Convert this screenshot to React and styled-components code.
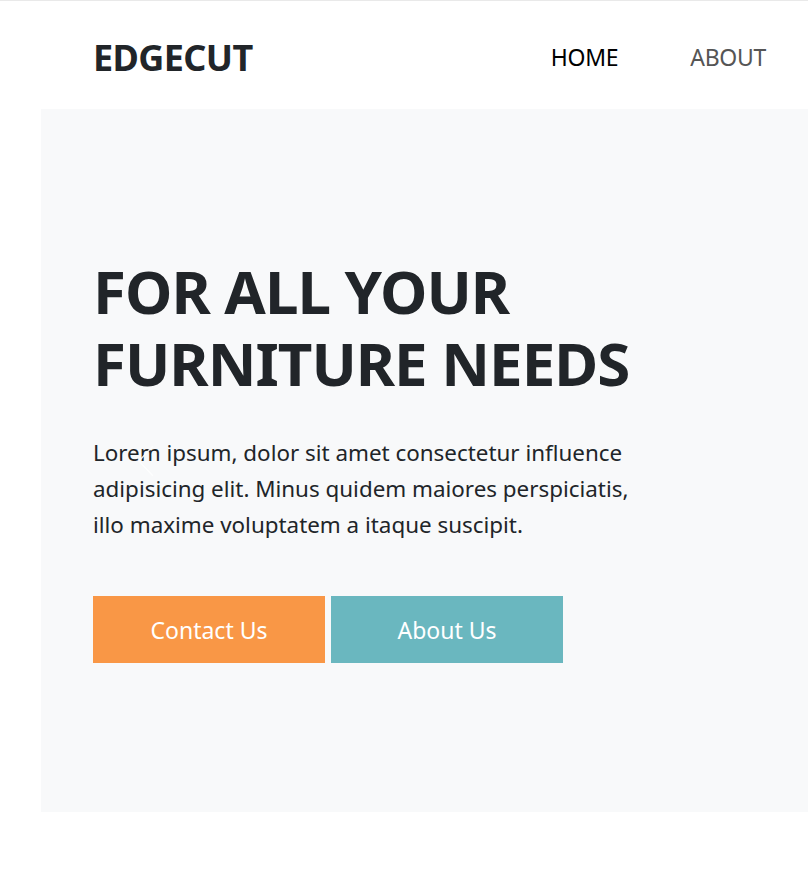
import React from 'react';
import styled, { createGlobalStyle } from 'styled-components';

const GlobalStyle = createGlobalStyle`
  html, body {
    margin: 0;
    padding: 0;
    background: #ffffff;
    overflow: hidden;
  }

  body {
    font-family: 'Noto Sans', 'Open Sans', sans-serif;
    color: #212529;
  }

  * {
    box-sizing: border-box;
  }
`;

const Page = styled.div`
  width: 808px;
  min-height: 873px;
  border-top: 1px solid #e9e9e9;
`;

const Header = styled.header`
  height: 108px;
  display: flex;
  align-items: center;
  padding: 0 42px 0 93px;
`;

const Logo = styled.a`
  font-size: 36px;
  font-weight: 700;
  color: #212529;
  letter-spacing: -0.6px;
  text-decoration: none;
  margin-top: 4px;
`;

const Nav = styled.nav`
  margin-left: auto;
  margin-top: 4px;
  display: flex;
  gap: 72px;
`;

const NavLink = styled.a`
  font-size: 23px;
  color: ${({ active }) => (active ? '#000000' : '#555555')};
  text-decoration: none;
  letter-spacing: -0.3px;
`;

const Hero = styled.section`
  position: relative;
  margin-left: 41px;
  height: 703px;
  background: #f8f9fa;
  padding: 146px 0 0 52px;
`;

const Title = styled.h1`
  margin: 0;
  font-size: 60px;
  line-height: 1.2;
  font-weight: 700;
  letter-spacing: -1px;
  color: #212529;
`;

const Lead = styled.p`
  margin: 36px 0 0;
  width: 550px;
  font-size: 22.4px;
  line-height: 36px;
  color: #212529;
`;

const Actions = styled.div`
  display: flex;
  gap: 6px;
  margin-top: 53px;
`;

const Button = styled.a`
  width: 232px;
  height: 67px;
  display: flex;
  align-items: center;
  justify-content: center;
  background: ${({ variant }) => (variant === 'teal' ? '#6ab7bf' : '#f99746')};
  color: #ffffff;
  font-size: 23px;
  text-decoration: none;
`;

const PrevArrow = styled.svg`
  position: absolute;
  left: 96px;
  top: 335px;
  width: 20px;
  height: 34px;
  opacity: 0.85;
`;

export default function App() {
  return (
    <Page>
      <GlobalStyle />
      <Header>
        <Logo href="#">EDGECUT</Logo>
        <Nav>
          <NavLink href="#" active>
            HOME
          </NavLink>
          <NavLink href="#">ABOUT</NavLink>
        </Nav>
      </Header>
      <Hero>
        <Title>
          FOR ALL YOUR
          <br />
          FURNITURE NEEDS
        </Title>
        <Lead>
          Lorem ipsum, dolor sit amet consectetur influence adipisicing elit. Minus quidem maiores
          perspiciatis, illo maxime voluptatem a itaque suscipit.
        </Lead>
        <Actions>
          <Button href="#">Contact Us</Button>
          <Button href="#" variant="teal">
            About Us
          </Button>
        </Actions>
        <PrevArrow viewBox="0 0 20 34" fill="none">
          <polyline points="16,2 2,17 16,32" stroke="#ffffff" strokeWidth="1.5" />
        </PrevArrow>
      </Hero>
    </Page>
  );
}
